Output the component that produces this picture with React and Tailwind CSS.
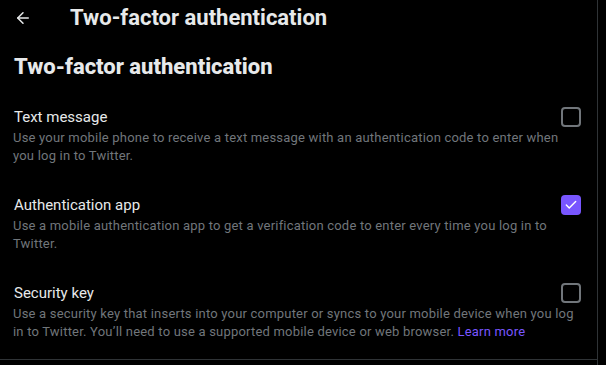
import { ArrowLeft, Check } from 'lucide-react'

const options = [
  {
    title: 'Text message',
    desc: 'Use your mobile phone to receive a text message with an authentication code to enter when you log in to Twitter.',
    checked: false,
  },
  {
    title: 'Authentication app',
    desc: 'Use a mobile authentication app to get a verification code to enter every time you log in to Twitter.',
    checked: true,
  },
  {
    title: 'Security key',
    desc: 'Use a security key that inserts into your computer or syncs to your mobile device when you log in to Twitter. You’ll need to use a supported mobile device or web browser.',
    checked: false,
    link: 'Learn more',
  },
]

function Box({ checked }) {
  if (checked) {
    return (
      <div className="w-5 h-5 rounded-[4px] bg-[#7856ff] flex items-center justify-center shrink-0">
        <Check size={14} strokeWidth={2.5} className="text-white" />
      </div>
    )
  }
  return <div className="w-5 h-5 rounded-[4px] border-2 border-[#71767b] shrink-0" />
}

function Option({ opt }) {
  return (
    <div className="pl-[14px] pr-4 h-[88px] pt-[7px]">
      <div className="flex items-center justify-between h-5">
        <span className="text-[15px] text-[#e7e9ea]">{opt.title}</span>
        <Box checked={opt.checked} />
      </div>
      <p className="w-[568px] -ml-px text-[13px] tracking-[0.2px] leading-[18px] text-[#71767b] mt-[2px]">
        {opt.desc}
        {opt.link && <span className="text-[#7856ff]"> {opt.link}</span>}
      </p>
    </div>
  )
}

export default function App() {
  return (
    <div className="w-[606px] h-[365px] bg-black overflow-hidden flex" style={{ fontFamily: 'Roboto, sans-serif' }}>
      <div className="w-[598px] border-r border-[#2f3336] h-full">
        <div className="h-[35px] flex items-center">
          <ArrowLeft size={18} strokeWidth={2} className="text-[#e7e9ea] ml-[14px]" />
          <h2 className="ml-[38px] text-[22px] font-bold text-[#e7e9ea]">Two-factor authentication</h2>
        </div>
        <h1 className="pl-[14px] pt-[17px] h-[65px] text-[22px] leading-[30px] font-extrabold text-[#e7e9ea]">Two-factor authentication</h1>
        {options.map((o, i) => <Option key={i} opt={o} />)}
        <div className="border-b border-[#2f3336] -mt-[5px]" />
      </div>
    </div>
  )
}
